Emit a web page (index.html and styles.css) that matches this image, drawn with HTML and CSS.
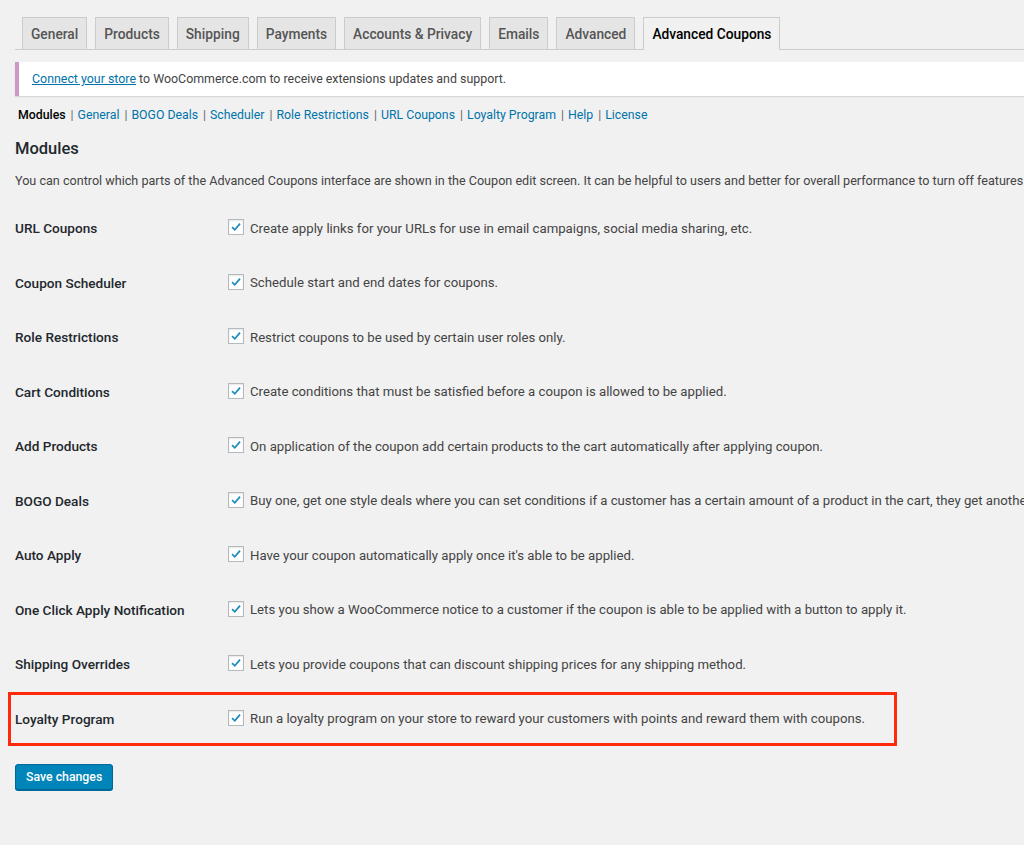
FILE: index.html
```html
<!DOCTYPE html>
<html>
<head>
<meta charset="utf-8">
<link rel="stylesheet" href="styles.css">
</head>
<body>
<div class="wrap">
  <nav class="tabs">
    <a class="tab">General</a>
    <a class="tab">Products</a>
    <a class="tab">Shipping</a>
    <a class="tab">Payments</a>
    <a class="tab">Accounts &amp; Privacy</a>
    <a class="tab">Emails</a>
    <a class="tab">Advanced</a>
    <a class="tab active">Advanced Coupons</a>
  </nav>
  <div class="notice"><a class="link-u">Connect your store</a> to WooCommerce.com to receive extensions updates and support.</div>
  <ul class="subnav">
    <li class="current">Modules</li>
    <li><span class="sep">|</span><a>General</a></li>
    <li><span class="sep">|</span><a>BOGO Deals</a></li>
    <li><span class="sep">|</span><a>Scheduler</a></li>
    <li><span class="sep">|</span><a>Role Restrictions</a></li>
    <li><span class="sep">|</span><a>URL Coupons</a></li>
    <li><span class="sep">|</span><a>Loyalty Program</a></li>
    <li><span class="sep">|</span><a>Help</a></li>
    <li><span class="sep">|</span><a>License</a></li>
  </ul>
  <h2 class="title">Modules</h2>
  <p class="desc">You can control which parts of the Advanced Coupons interface are shown in the Coupon edit screen. It can be helpful to users and better for overall performance to turn off features that you don't use.</p>
  <div class="rows">
    <div class="row"><div class="label">URL Coupons</div><div class="field"><span class="cb"><svg viewBox="0 0 16 16"><path d="M3.5 8.2 L6.6 11.2 L12.6 4.2" fill="none" stroke="#1e8cbe" stroke-width="2"/></svg></span>Create apply links for your URLs for use in email campaigns, social media sharing, etc.</div></div>
    <div class="row"><div class="label">Coupon Scheduler</div><div class="field"><span class="cb"><svg viewBox="0 0 16 16"><path d="M3.5 8.2 L6.6 11.2 L12.6 4.2" fill="none" stroke="#1e8cbe" stroke-width="2"/></svg></span>Schedule start and end dates for coupons.</div></div>
    <div class="row"><div class="label">Role Restrictions</div><div class="field"><span class="cb"><svg viewBox="0 0 16 16"><path d="M3.5 8.2 L6.6 11.2 L12.6 4.2" fill="none" stroke="#1e8cbe" stroke-width="2"/></svg></span>Restrict coupons to be used by certain user roles only.</div></div>
    <div class="row"><div class="label">Cart Conditions</div><div class="field"><span class="cb"><svg viewBox="0 0 16 16"><path d="M3.5 8.2 L6.6 11.2 L12.6 4.2" fill="none" stroke="#1e8cbe" stroke-width="2"/></svg></span>Create conditions that must be satisfied before a coupon is allowed to be applied.</div></div>
    <div class="row"><div class="label">Add Products</div><div class="field"><span class="cb"><svg viewBox="0 0 16 16"><path d="M3.5 8.2 L6.6 11.2 L12.6 4.2" fill="none" stroke="#1e8cbe" stroke-width="2"/></svg></span>On application of the coupon add certain products to the cart automatically after applying coupon.</div></div>
    <div class="row"><div class="label">BOGO Deals</div><div class="field"><span class="cb"><svg viewBox="0 0 16 16"><path d="M3.5 8.2 L6.6 11.2 L12.6 4.2" fill="none" stroke="#1e8cbe" stroke-width="2"/></svg></span>Buy one, get one style deals where you can set conditions if a customer has a certain amount of a product in the cart, they get another product for free.</div></div>
    <div class="row"><div class="label">Auto Apply</div><div class="field"><span class="cb"><svg viewBox="0 0 16 16"><path d="M3.5 8.2 L6.6 11.2 L12.6 4.2" fill="none" stroke="#1e8cbe" stroke-width="2"/></svg></span>Have your coupon automatically apply once it's able to be applied.</div></div>
    <div class="row"><div class="label">One Click Apply Notification</div><div class="field"><span class="cb"><svg viewBox="0 0 16 16"><path d="M3.5 8.2 L6.6 11.2 L12.6 4.2" fill="none" stroke="#1e8cbe" stroke-width="2"/></svg></span>Lets you show a WooCommerce notice to a customer if the coupon is able to be applied with a button to apply it.</div></div>
    <div class="row"><div class="label">Shipping Overrides</div><div class="field"><span class="cb"><svg viewBox="0 0 16 16"><path d="M3.5 8.2 L6.6 11.2 L12.6 4.2" fill="none" stroke="#1e8cbe" stroke-width="2"/></svg></span>Lets you provide coupons that can discount shipping prices for any shipping method.</div></div>
    <div class="row highlight"><div class="label">Loyalty Program</div><div class="field"><span class="cb"><svg viewBox="0 0 16 16"><path d="M3.5 8.2 L6.6 11.2 L12.6 4.2" fill="none" stroke="#1e8cbe" stroke-width="2"/></svg></span>Run a loyalty program on your store to reward your customers with points and reward them with coupons.</div></div>
  </div>
  <button class="save">Save changes</button>
</div>
</body>
</html>
```
FILE: styles.css
```css
html, body {
  margin: 0;
  padding: 0;
  background: #f1f1f1;
  overflow: hidden;
}
body {
  font-family: Roboto, Inter, sans-serif;
  font-size: 13px;
  color: #444;
  width: 1024px;
  height: 845px;
}
.wrap {
  padding: 17px 0 0 15px;
  white-space: nowrap;
}
.tabs {
  display: flex;
  gap: 8px;
  padding-left: 7px;
  border-bottom: 1px solid #ccc;
  height: 32px;
}
.tab {
  display: block;
  box-sizing: border-box;
  height: 32px;
  padding: 0 8px;
  line-height: 32px;
  font-size: 13.75px;
  font-weight: 500;
  color: #555;
  background: #e5e5e5;
  border: 1px solid #ccc;
  border-bottom: none;
}
.tab.active {
  background: #f1f1f1;
  color: #000;
  height: 33px;
  margin-bottom: -1px;
}
.notice {
  margin-top: 12px;
  background: #fff;
  border-left: 4px solid #cc99c2;
  box-shadow: 0 1px 1px rgba(0,0,0,.1);
  height: 34px;
  line-height: 33px;
  padding-left: 13px;
  color: #444;
  font-size: 12.4px;
}
.link-u {
  color: #0073aa;
  text-decoration: underline;
}
.subnav {
  list-style: none;
  margin: 11px 0 0 3px;
  padding: 0;
  display: flex;
  line-height: 16px;
  font-size: 12.3px;
}
.subnav li {
  color: #0073aa;
}
.subnav li.current {
  color: #000;
  font-weight: 500;
}
.subnav .sep {
  color: #666;
  padding: 0 4px 0 5px;
}
.title {
  margin: 14px 0 0;
  font-size: 16.5px;
  font-weight: 500;
  color: #23282d;
  line-height: 24px;
}
.desc {
  margin: 10px 0 0;
  font-size: 12.6px;
  line-height: 20px;
}
.rows {
  margin-top: 10px;
}
.row {
  display: flex;
  align-items: center;
  height: 54.5px;
  position: relative;
  font-size: 13.2px;
}
.label {
  width: 213px;
  flex: none;
  font-weight: 500;
  font-size: 13.6px;
  color: #23282d;
}
.field {
  display: flex;
  align-items: center;
}
.cb {
  display: inline-block;
  box-sizing: border-box;
  width: 16px;
  height: 16px;
  border: 1px solid #b4b9be;
  background: #fff;
  box-shadow: inset 0 1px 2px rgba(0,0,0,.1);
  margin-right: 6px;
  margin-top: -2px;
}
.cb svg {
  display: block;
  width: 14px;
  height: 14px;
}
.highlight::after {
  content: "";
  position: absolute;
  left: -7px;
  top: 0;
  width: 889px;
  height: 54px;
  box-sizing: border-box;
  border: 3px solid #ff2a0c;
}
.save {
  margin-top: 18px;
  display: block;
  height: 26px;
  padding: 0 10px;
  font-family: inherit;
  font-size: 12.3px;
  font-weight: 500;
  color: #fff;
  background: #0085ba;
  border: 1px solid #006799;
  border-radius: 3px;
  box-shadow: 0 1px 0 #006799;
}
```
